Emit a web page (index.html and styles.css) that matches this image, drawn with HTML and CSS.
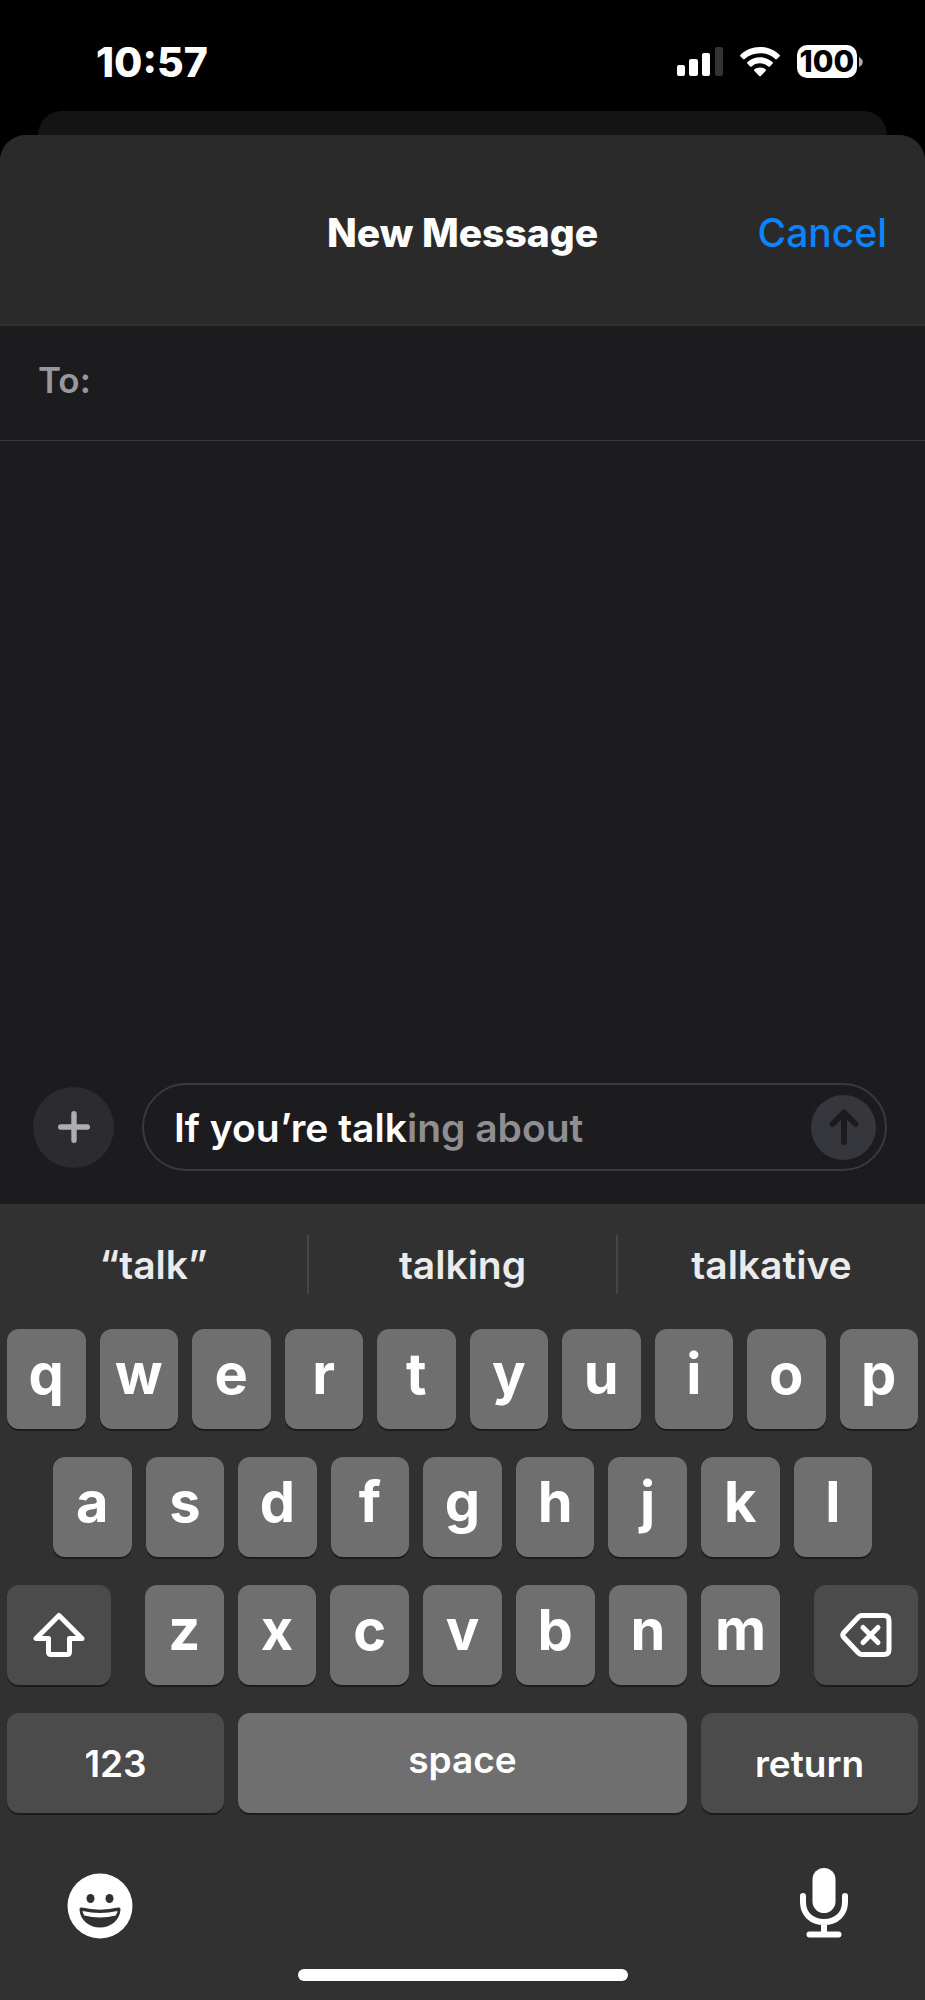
FILE: index.html
```
<!DOCTYPE html>
<html lang="en">
<head>
    <meta charset="UTF-8">
    <meta name="viewport" content="width=device-width, initial-scale=1.0">
    <title>New Message</title>
    <link rel="stylesheet" href="styles.css">
</head>
<body>
    <div class="status-bar">
        <span class="time">10:57</span>
        <div class="status-icons">
            <svg class="signal" width="46" height="30" viewBox="0 0 46 30" fill="#fff">
                <rect x="0" y="18" width="8" height="11" rx="2" />
                <rect x="12" y="12" width="9" height="17" rx="2" />
                <rect x="25" y="6" width="8" height="23" rx="2" />
                <rect x="38" y="0" width="8" height="29" rx="2" fill="#333" />
            </svg>
            <svg class="wifi" width="40" height="30" viewBox="0 0 40 30" fill="#fff">
                <path d="M20 0C12.3 0 5.4 3 .5 7.8c-.5.5-.5 1.100 0 1.600l2.600 2.600c.5.500 1.100.5 1.600 0C8.700 8.300 14.100 6.200 20 6.200S31.300 8.300 35.300 12c.5.500 1.100.5 1.600 0l2.600-2.600c.5-.5.5-1.100 0-1.600C34.600 3 27.700 0 20 0z" />
                <path d="M20 10.300c-4.800 0-9.200 1.800-12.500 4.800-.5.500-.5 1.100 0 1.600l2.700 2.700c.4.400 1 .4 1.500 0 2.200-1.900 5.100-3.100 8.300-3.100s6.100 1.200 8.300 3.100c.5.400 1.100.4 1.500 0l2.700-2.700c.5-.5.5-1.100 0-1.600-3.300-3-7.700-4.800-12.500-4.800z" />
                <path d="M20 20.400c-2.100 0-4 .7-5.500 1.900-.5.400-.5 1.100-.1 1.600l4.800 5c.5.500 1.100.5 1.600 0l4.800-5c.4-.5.4-1.200-.1-1.600-1.500-1.200-3.400-1.900-5.500-1.900z" />
            </svg>
            <div class="battery">
                <span class="battery-level">100</span>
                <svg width="4" height="10" viewBox="0 0 4 10" fill="#aaa"><path d="M0 0c5 2 5 8 0 10z" /></svg>
            </div>
        </div>
    </div>

    <div class="sheet-behind"></div>

    <main class="sheet">
        <header class="sheet-header">
            <h1>New Message</h1>
            <button type="button" class="cancel">Cancel</button>
        </header>

        <div class="recipient">
            <label for="to">To:</label>
            <input type="text" id="to" name="to">
        </div>

        <div class="conversation"></div>

        <form class="compose">
            <button type="button" class="add" aria-label="Add attachment">
                <svg width="32" height="32" viewBox="0 0 32 32" fill="none" stroke="#aeaeb2" stroke-width="5.400" stroke-linecap="round">
                    <path d="M16 2.700v26.600M2.700 16h26.600" />
                </svg>
            </button>
            <div class="message-field">
                <input type="text" id="message" name="message" aria-label="Message" value="If you’re talk" autocomplete="off">
                <span class="prediction">ing about</span>
                <button type="submit" class="send" aria-label="Send">
                    <svg width="30" height="36" viewBox="0 0 30 36" fill="none" stroke="#1c1c1e" stroke-width="6" stroke-linecap="round" stroke-linejoin="round">
                        <path d="M15 33V4M3.500 15L15 3.500 26.500 15" />
                    </svg>
                </button>
            </div>
        </form>
    </main>

    <section class="keyboard" aria-label="Keyboard">
        <div class="suggestions">
            <button type="button">“talk”</button>
            <button type="button">talking</button>
            <button type="button">talkative</button>
        </div>

        <div class="keys">
            <div class="row">
                <button type="button" class="key">q</button>
                <button type="button" class="key">w</button>
                <button type="button" class="key">e</button>
                <button type="button" class="key">r</button>
                <button type="button" class="key">t</button>
                <button type="button" class="key">y</button>
                <button type="button" class="key">u</button>
                <button type="button" class="key">i</button>
                <button type="button" class="key">o</button>
                <button type="button" class="key">p</button>
            </div>
            <div class="row row-home">
                <button type="button" class="key">a</button>
                <button type="button" class="key">s</button>
                <button type="button" class="key">d</button>
                <button type="button" class="key">f</button>
                <button type="button" class="key">g</button>
                <button type="button" class="key">h</button>
                <button type="button" class="key">j</button>
                <button type="button" class="key">k</button>
                <button type="button" class="key">l</button>
            </div>
            <div class="row-shift">
                <button type="button" class="key key-dark" aria-label="Shift">
                    <svg width="52" height="46" viewBox="0 0 52 46" fill="none" stroke="#fff" stroke-width="5" stroke-linejoin="round">
                        <path d="M26 3.500L3 26.500h12.500V40q0 2.500 2.500 2.500h16q2.500 0 2.500-2.500V26.500H49z" />
                    </svg>
                </button>
                <div class="row">
                    <button type="button" class="key">z</button>
                    <button type="button" class="key">x</button>
                    <button type="button" class="key">c</button>
                    <button type="button" class="key">v</button>
                    <button type="button" class="key">b</button>
                    <button type="button" class="key">n</button>
                    <button type="button" class="key">m</button>
                </div>
                <button type="button" class="key key-dark" aria-label="Delete">
                    <svg width="52" height="46" viewBox="0 0 52 46" fill="none" stroke="#fff" stroke-width="5" stroke-linecap="round" stroke-linejoin="round">
                        <path d="M22 3.500h22q5 0 5 5v29q0 5-5 5H22q-2 0-3.500-1.500L3.500 25q-1.500-2 0-4L18.500 5Q20 3.500 22 3.500z" />
                        <path d="M23 15.500l15 15M38 15.500l-15 15" />
                    </svg>
                </button>
            </div>
            <div class="row-space">
                <button type="button" class="key key-dark key-word">123</button>
                <button type="button" class="key key-word key-space">space</button>
                <button type="button" class="key key-dark key-word">return</button>
            </div>
        </div>

        <div class="keyboard-footer">
            <button type="button" aria-label="Emoji">
                <svg width="66" height="66" viewBox="0 0 66 66">
                    <circle cx="33" cy="33" r="32.500" fill="#fff" />
                    <ellipse cx="23.500" cy="25.500" rx="4" ry="4.500" fill="#313131" />
                    <ellipse cx="42.500" cy="25.500" rx="4" ry="4.500" fill="#313131" />
                    <path d="M12.500 36.500q-.2-2.500 2.300-2Q33 38.800 51.200 34.500q2.500-.5 2.300 2C53 47 44 54.500 33 54.500S13 47 12.500 36.500z" fill="#313131" />
                    <path d="M15.500 38Q33 42 50.500 38q-.3 2.500-1.800 4.500Q33 46.300 17.300 42.500 15.800 40.500 15.500 38z" fill="#fff" />
                </svg>
            </button>
            <button type="button" aria-label="Dictate">
                <svg width="50" height="72" viewBox="0 0 50 72" fill="none" stroke="#fff" stroke-width="6" stroke-linecap="round">
                    <rect x="13.500" y="1" width="23" height="45" rx="11.500" fill="#fff" stroke="none" />
                    <path d="M4 29v6c0 12 8.500 20 21 20s21-8 21-20v-6M25 55v12M10.500 67.500h29" />
                </svg>
            </button>
        </div>

        <div class="home-indicator"></div>
    </section>
</body>
</html>
```
FILE: styles.css
```
* {
    margin: 0;
    padding: 0;
    box-sizing: border-box;
    font-family: 'Inter', sans-serif;
}

body {
    background: #000;
    color: #fff;
    min-height: 100vh;
    display: flex;
    flex-direction: column;
    font-size: 39px;
}

button {
    background: none;
    border: none;
    color: inherit;
    font-size: inherit;
    cursor: pointer;
}

input {
    background: none;
    border: none;
    outline: none;
    color: inherit;
    font-size: inherit;
    font-weight: inherit;
}

svg {
    display: block;
}

/* Status bar */
.status-bar {
    height: 111px;
    padding: 12px 62px 0 96px;
    display: flex;
    align-items: center;
    justify-content: space-between;
}

.time {
    font-size: 41px;
    font-weight: 800;
}

.status-icons {
    display: flex;
    align-items: center;
    gap: 17px;
}

.battery {
    display: flex;
    align-items: center;
    gap: 2px;
}

.battery-level {
    width: 60px;
    height: 33px;
    background: #fff;
    border-radius: 10px;
    color: #000;
    font-size: 30px;
    font-weight: 800;
    line-height: 33px;
    text-align: center;
}

/* Sheet */
.sheet-behind {
    height: 24px;
    margin: 0 38px;
    background: #141414;
    border-radius: 24px 24px 0 0;
}

.sheet {
    flex: 1;
    display: flex;
    flex-direction: column;
    background: #1c1c1e;
    border-radius: 26px 26px 0 0;
    overflow: hidden;
}

.sheet-header {
    height: 191px;
    padding: 5px 38px 0;
    background: #2a2a2a;
    border-bottom: 2px solid #303031;
    display: grid;
    grid-template-columns: 1fr auto 1fr;
    align-items: center;
}

.sheet-header h1 {
    grid-column: 2;
    font-size: 39px;
    font-weight: 800;
}

.cancel {
    justify-self: end;
    color: #0a84ff;
    font-weight: 500;
}

.recipient {
    height: 115px;
    padding: 0 38px 7px;
    border-bottom: 1px solid #38383a;
    display: flex;
    align-items: center;
    gap: 12px;
    font-size: 35px;
    font-weight: 600;
}

.recipient label {
    color: #98989f;
}

.recipient input {
    flex: 1;
    min-width: 0;
}

.conversation {
    flex: 1;
}

.compose {
    padding: 0 38px 33px 33px;
    display: flex;
    align-items: center;
    gap: 28px;
}

.add {
    flex: none;
    width: 81px;
    height: 81px;
    background: #2c2c2e;
    border-radius: 50%;
    display: flex;
    align-items: center;
    justify-content: center;
}

.message-field {
    flex: 1;
    height: 88px;
    padding: 0 9px 0 30px;
    border: 2px solid #3a3a3c;
    border-radius: 44px;
    display: flex;
    align-items: center;
    font-weight: 600;
}

.message-field input {
    field-sizing: content;
}

.prediction {
    color: #8e8e93;
}

.send {
    margin-left: auto;
    width: 65px;
    height: 65px;
    background: #36373d;
    border-radius: 50%;
    display: flex;
    align-items: center;
    justify-content: center;
}

/* Keyboard */
.keyboard {
    background: #313131;
    padding-bottom: 19px;
}

.suggestions {
    height: 121px;
    display: flex;
    align-items: center;
    margin-bottom: 4px;
}

.suggestions button {
    flex: 1;
    height: 59px;
    color: #ebebeb;
    font-weight: 600;
}

.suggestions button:not(:last-child) {
    border-right: 2px solid #464646;
}

.keys {
    padding: 0 7px;
    display: flex;
    flex-direction: column;
    gap: 28px;
}

.row {
    display: flex;
    gap: 14px;
}

.row-home {
    padding: 0 46px;
}

.row-shift {
    display: grid;
    grid-template-columns: 104fr 635fr 104fr;
    gap: 34px;
}

.row-space {
    display: grid;
    grid-template-columns: 217fr 449fr 217fr;
    gap: 14px;
}

.key {
    flex: 1;
    min-width: 0;
    height: 100px;
    padding-bottom: 11px;
    background: #6f6f6f;
    border-radius: 12px;
    box-shadow: 0 2px 0 #1c1c1c;
    font-size: 56px;
    font-weight: 700;
}

.key-dark {
    background: #4b4b4b;
    padding-bottom: 0;
}

.key svg {
    margin: 0 auto;
}

.key-word {
    font-size: 37px;
    font-weight: 600;
}

.key-space {
    padding-bottom: 8px;
}

.keyboard-footer {
    margin-top: 54px;
    padding: 0 76px 0 67px;
    display: flex;
    align-items: flex-end;
    justify-content: space-between;
}

.home-indicator {
    width: 330px;
    height: 12px;
    margin: 30px auto 0;
    background: #fff;
    border-radius: 6px;
}
```
